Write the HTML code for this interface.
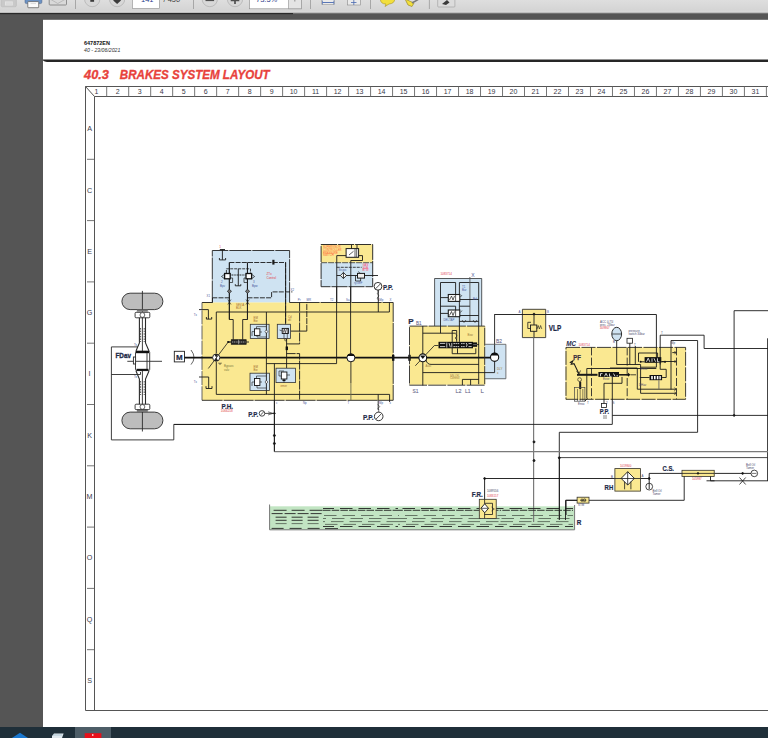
<!DOCTYPE html>
<html><head><meta charset="utf-8">
<style>
html,body{margin:0;padding:0;width:768px;height:738px;overflow:hidden;background:#555;}
svg{display:block;position:absolute;left:0;top:0;}
text{font-family:"Liberation Sans",sans-serif;}
</style></head><body>
<svg width="768" height="738" viewBox="0 0 768 738">
<defs>
<linearGradient id="tb" x1="0" y1="0" x2="0" y2="1">
<stop offset="0" stop-color="#dedede"/><stop offset="1" stop-color="#d2d2d2"/>
</linearGradient>
</defs>
<!-- background -->
<rect x="0" y="0" width="768" height="738" fill="#555"/>
<!-- toolbar -->
<rect x="0" y="0" width="768" height="13" fill="url(#tb)"/>
<rect x="0" y="10.8" width="768" height="1" fill="#d9d9d9"/>
<rect x="0" y="12.6" width="768" height="0.8" fill="#a0a0a0"/>
<rect x="0" y="13" width="293" height="1.2" fill="#2a2a2a"/>
<g id="tbicons">
<path d="M1.1 -2 H16.4 V5.3 Q16.4 6.8 14.9 6.8 H2.6 Q1.1 6.8 1.1 5.3 Z" fill="#c9c9c9" stroke="#b5b5b5" stroke-width="0.5"/>
<rect x="5" y="1.4" width="7.8" height="4.1" fill="#e3e3e3"/>
<path d="M6 3 H12 M6 4.3 H12" stroke="#c8c8c8" stroke-width="0.4"/>
<rect x="25" y="-2" width="16.9" height="5.6" rx="1.5" fill="#6b92c4" stroke="#4a5f80" stroke-width="0.5"/>
<rect x="27.8" y="1.6" width="10.9" height="6.1" rx="0.6" fill="#fbfbfb" stroke="#555" stroke-width="0.7"/>
<path d="M30.5 3.6 H36" stroke="#bbb" stroke-width="0.5"/>
<rect x="49.2" y="-2" width="17.3" height="7" rx="0.8" fill="#d9d9d9" stroke="#7a7a7a" stroke-width="0.8"/>
<path d="M50 -1 L57.8 3.5 L65.7 -1" fill="none" stroke="#a5a5a5" stroke-width="0.6"/>
<rect x="75.2" y="0" width="0.8" height="9" fill="#9a9a9a"/>
<circle cx="92.2" cy="-1" r="7.7" fill="#d8d8d8" stroke="#a8a8a8" stroke-width="0.6"/>
<rect x="90.3" y="-2" width="3.8" height="3.8" fill="#3c3c3c"/>
<circle cx="117.1" cy="-1" r="7.7" fill="#d8d8d8" stroke="#a8a8a8" stroke-width="0.6"/>
<path d="M113.2 0.5 L117.1 4 L121 0.5 L119 -1.5 H115.2 Z" fill="#3c3c3c"/>
<rect x="132.4" y="-1" width="27" height="9.5" fill="#fff" stroke="#8c8c8c" stroke-width="0.6"/>
<text x="141" y="1.8" font-size="7.5" fill="#2a3a8a">141</text>
<text x="163.5" y="1.8" font-size="7.5" fill="#444">/ 450</text>
<rect x="193" y="0" width="0.8" height="9" fill="#9a9a9a"/>
<circle cx="209.8" cy="-1" r="7.7" fill="#d8d8d8" stroke="#a8a8a8" stroke-width="0.6"/>
<rect x="205.5" y="-0.5" width="8.6" height="1.6" fill="#505050"/>
<circle cx="235" cy="-1" r="7.7" fill="#d8d8d8" stroke="#a8a8a8" stroke-width="0.6"/>
<path d="M230.7 0.3 H239.3 M235 -4 V4" stroke="#505050" stroke-width="1.7"/>
<rect x="249.6" y="-1" width="52" height="9.8" fill="#fff" stroke="#8c8c8c" stroke-width="0.6"/>
<rect x="288.7" y="-1" width="12.9" height="9.8" fill="#e4e4e4" stroke="#8c8c8c" stroke-width="0.6"/>
<text x="256" y="1.8" font-size="7.5" fill="#2a3a8a">73.5%</text>
<rect x="294.6" y="0" width="0.6" height="1.5" fill="#555"/>
<rect x="310" y="0" width="0.8" height="9" fill="#9a9a9a"/>
<rect x="321.7" y="-2" width="12.9" height="6.5" fill="#eaeaea" stroke="#9a9a9a" stroke-width="0.6"/>
<path d="M322.5 2.5 H333.8" stroke="#4a6ab0" stroke-width="0.9"/>
<path d="M322.5 0.5 V4.5 M333.8 0.5 V4.5" stroke="#4a6ab0" stroke-width="0.7"/>
<rect x="347.4" y="-2" width="12.9" height="7" fill="#eaeaea" stroke="#8a8a8a" stroke-width="0.6"/>
<path d="M351 2.5 H356.5 M353.8 -0.5 V5" stroke="#4a6ab0" stroke-width="0.8"/>
<rect x="370.2" y="0" width="0.8" height="9" fill="#9a9a9a"/>
<path d="M380.4 -1 Q380.4 4 386 4 L385 6.5 L389 4 Q394.7 3.5 394.7 -1 Z" fill="#f2df3c" stroke="#a79420" stroke-width="0.6"/>
<path d="M405 -1 L414 3 L412 6.5 L408 5 Z" fill="#f2df3c" stroke="#8a7a20" stroke-width="0.6"/>
<path d="M412 3 L419 -1" stroke="#7a7a7a" stroke-width="1.5"/>
<rect x="428.9" y="0" width="0.8" height="9" fill="#9a9a9a"/>
<rect x="437.7" y="-2" width="17.2" height="9" rx="0.8" fill="#dcdcdc" stroke="#9a9a9a" stroke-width="0.6"/>
<path d="M442 4 L447 0 L449.5 2.5 L446 5 Z" fill="#3a3a3a"/>
</g>
<!-- page -->
<rect x="43" y="19.8" width="725" height="707.2" fill="#fff"/>
<!-- taskbar -->
<rect x="0" y="727" width="768" height="11" fill="#1f2f39"/>
<rect x="75" y="727" width="36" height="11" fill="#4d5d67"/>
<path d="M11.9 738 L20 732.7 L28 738 Z" fill="#1a78d0"/>
<path d="M52 736 L54 733.5 H63.6 L62 738 H52 Z" fill="#dfe8ee"/>
<path d="M53 735 H62" stroke="#8fb0c0" stroke-width="0.6"/>
<rect x="84.7" y="733.2" width="16.7" height="5" fill="#e8101a"/>
<rect x="92.3" y="734" width="1" height="2" fill="#fff"/>

<g id="page">
<!-- header -->
<text x="84" y="44.8" font-size="5.4" font-weight="bold" fill="#111" textLength="26" lengthAdjust="spacingAndGlyphs">647872EN</text>
<text x="84" y="52" font-size="5.4" font-style="italic" fill="#333" textLength="36.4" lengthAdjust="spacingAndGlyphs">40 - 23/06/2021</text>
<path d="M43 59.4 H768 V61.9 H47 Q44.5 61.6 43 60.4 Z" fill="#262626"/>
<text x="84" y="78.9" font-size="13.6" font-weight="bold" font-style="italic" fill="#e8423c" stroke="#e8423c" stroke-width="0.35" textLength="25" lengthAdjust="spacingAndGlyphs">40.3</text>
<text x="119.8" y="78.9" font-size="13.6" font-weight="bold" font-style="italic" fill="#e8423c" stroke="#e8423c" stroke-width="0.35" textLength="149.8" lengthAdjust="spacingAndGlyphs">BRAKES SYSTEM LAYOUT</text>
</g>

<g id="frame" stroke="#555" stroke-width="1" fill="none">
<path d="M85.5 86.5 H768 M94.5 96.5 H768 M85.5 86.5 V710.5 H768 M94.5 96.5 V710.5 M85.5 86.5 L94.5 96.5"/>
</g>
<g id="ruler" stroke="#666" stroke-width="0.9" fill="none">
<path d="M106.70 86.5 V96.5 M128.69 86.5 V96.5 M150.68 86.5 V96.5 M172.67 86.5 V96.5 M194.66 86.5 V96.5 M216.65 86.5 V96.5 M238.64 86.5 V96.5 M260.63 86.5 V96.5 M282.62 86.5 V96.5 M304.61 86.5 V96.5 M326.60 86.5 V96.5 M348.59 86.5 V96.5 M370.58 86.5 V96.5 M392.57 86.5 V96.5 M414.56 86.5 V96.5 M436.55 86.5 V96.5 M458.54 86.5 V96.5 M480.53 86.5 V96.5 M502.52 86.5 V96.5 M524.51 86.5 V96.5 M546.50 86.5 V96.5 M568.49 86.5 V96.5 M590.48 86.5 V96.5 M612.47 86.5 V96.5 M634.46 86.5 V96.5 M656.45 86.5 V96.5 M678.44 86.5 V96.5 M700.43 86.5 V96.5 M722.42 86.5 V96.5 M744.41 86.5 V96.5 M766.40 86.5 V96.5 M87 159.30 H94 M87 220.60 H94 M87 281.90 H94 M87 343.20 H94 M87 404.50 H94 M87 465.80 H94 M87 527.10 H94 M87 588.40 H94 M87 649.70 H94"/>
</g>
<g font-size="7" fill="#3a3a4a" text-anchor="middle">
<text x="96.5" y="94.2">1</text>
<text x="117.70" y="94.2">2</text>
<text x="139.69" y="94.2">3</text>
<text x="161.68" y="94.2">4</text>
<text x="183.67" y="94.2">5</text>
<text x="205.66" y="94.2">6</text>
<text x="227.65" y="94.2">7</text>
<text x="249.64" y="94.2">8</text>
<text x="271.63" y="94.2">9</text>
<text x="293.62" y="94.2">10</text>
<text x="315.61" y="94.2">11</text>
<text x="337.60" y="94.2">12</text>
<text x="359.59" y="94.2">13</text>
<text x="381.58" y="94.2">14</text>
<text x="403.57" y="94.2">15</text>
<text x="425.56" y="94.2">16</text>
<text x="447.55" y="94.2">17</text>
<text x="469.54" y="94.2">18</text>
<text x="491.53" y="94.2">19</text>
<text x="513.52" y="94.2">20</text>
<text x="535.51" y="94.2">21</text>
<text x="557.50" y="94.2">22</text>
<text x="579.49" y="94.2">23</text>
<text x="601.48" y="94.2">24</text>
<text x="623.47" y="94.2">25</text>
<text x="645.46" y="94.2">26</text>
<text x="667.45" y="94.2">27</text>
<text x="689.44" y="94.2">28</text>
<text x="711.43" y="94.2">29</text>
<text x="733.42" y="94.2">30</text>
<text x="755.41" y="94.2">31</text>
<text x="89.6" y="131.25" font-size="7.2">A</text>
<text x="89.6" y="192.55" font-size="7.2">C</text>
<text x="89.6" y="253.85" font-size="7.2">E</text>
<text x="89.6" y="315.15" font-size="7.2">G</text>
<text x="89.6" y="376.45" font-size="7.2">I</text>
<text x="89.6" y="437.75" font-size="7.2">K</text>
<text x="89.6" y="499.05" font-size="7.2">M</text>
<text x="89.6" y="560.35" font-size="7.2">O</text>
<text x="89.6" y="621.65" font-size="7.2">Q</text>
<text x="89.6" y="682.95" font-size="7.2">S</text>
</g>
<g id="diagram">
<!-- fills -->
<g stroke="none">
<rect x="202" y="302.3" width="191.2" height="98" fill="#fae891"/>
<rect x="212.3" y="250.5" width="77.3" height="51.8" fill="#cfe3f2"/>
<rect x="321" y="244.4" width="51.7" height="18.3" fill="#fae891"/>
<rect x="321" y="262.7" width="51.7" height="23.9" fill="#cfe3f2"/>
<rect x="409.5" y="326" width="75.8" height="58.8" fill="#fae891"/>
<rect x="434.4" y="278.2" width="47.6" height="47.8" fill="#cfe3f2"/>
<rect x="485.2" y="344.4" width="20.7" height="34.9" fill="#cfe3f2"/>
<rect x="522.3" y="309.1" width="23.4" height="28.5" fill="#fae891"/>
<rect x="565.5" y="347.3" width="120.3" height="52.5" fill="#fae891"/>
<rect x="269.5" y="506.3" width="305" height="23.4" fill="#c2e5c3"/>
<rect x="479.3" y="499.5" width="17.1" height="18.6" fill="#fae891"/>
<rect x="614.8" y="468.1" width="25.6" height="23.2" fill="#fae891"/>
<rect x="681.9" y="470.5" width="32.7" height="5.9" fill="#fae891"/>
<rect x="577.1" y="497.2" width="11.9" height="5.9" fill="#fae891"/>
</g>

<!-- wheels & axle -->
<g stroke="#2a2a2a" stroke-width="0.9" fill="none">
<rect x="121.9" y="293.2" width="41" height="16.4" rx="8.2" fill="#bdbdbd"/>
<rect x="121.9" y="412.1" width="41" height="16.7" rx="8.3" fill="#bdbdbd"/>
<path d="M142.4 290.9 V317.8 M142.4 404.2 V431.5"/>
<rect x="136.9" y="309.6" width="10.9" height="2" fill="#777" stroke="none"/>
<rect x="136.9" y="409.6" width="10.9" height="2.4" fill="#777" stroke="none"/>
<rect x="135.1" y="312.3" width="14.7" height="5.5" rx="1" fill="#fff"/>
<rect x="135.1" y="404.2" width="14.7" height="5.4" rx="1" fill="#fff"/>
<circle cx="142.4" cy="315" r="2.4" fill="#fff" stroke-width="0.7"/>
<circle cx="142.4" cy="406.9" r="2.4" fill="#fff" stroke-width="0.7"/>
<path d="M139.4 317.8 V343 L136 351 M145.5 317.8 V343 L149 351 M139.4 404.2 V379 L136 371 M145.5 404.2 V379 L149 371" stroke-width="1.1"/>
<path d="M142.4 317.4 V404.4" stroke-width="0.9"/>
<path d="M140.6 328 V342 M144.2 328 V342 M140.6 381 V395 M144.2 381 V395" stroke-dasharray="1.6 1" stroke-width="0.8"/>
<rect x="135.5" y="351.1" width="14.2" height="19.5" rx="1.2" fill="#fff"/>
<rect x="136" y="351" width="13" height="2.2" fill="#111" stroke="none"/>
<rect x="136.5" y="368.8" width="12" height="2" fill="#111" stroke="none"/>
<path d="M127.3 361.3 H162 M147 353 V369"/>
<rect x="133.4" y="357" width="2.2" height="7" fill="#fff"/>
<path d="M111.4 346.9 H137.8 M111.4 346.9 V439.9 H173.8 V424.5 H274 M111.4 374.5 H140.5 V372"/>
</g>
<text x="115.5" y="357.8" font-size="7.8" font-weight="bold" fill="#1e2a48" stroke="#1e2a48" stroke-width="0.35" textLength="15.5" lengthAdjust="spacingAndGlyphs">FDav</text>
<text x="134" y="345.5" font-size="2.9" fill="#3a4a8a">Ts</text>
<text x="134" y="377.5" font-size="2.9" fill="#3a4a8a">Ts</text>

<!-- M -->
<g stroke="#222" fill="none">
<rect x="174.3" y="351.3" width="10.2" height="10.6" stroke-width="0.9" fill="#fff"/>
<path d="M191 350 Q197 357.6 191 364.6" stroke-width="0.7"/>
</g>
<text x="175.9" y="359.6" font-size="7.6" font-weight="bold" fill="#1e2a48" stroke="#1e2a48" stroke-width="0.22" textLength="6.6" lengthAdjust="spacingAndGlyphs">M</text>
</g>

<!-- P.H. block -->
<g stroke="#1a1a1a" stroke-width="0.9" fill="none">
<!-- block borders (dashed) -->
<path d="M202 400.3 V302.5" stroke="#555" stroke-width="0.9" stroke-dasharray="14 1.2"/><path d="M289.6 302.5 H393.2 V400.3 H202" stroke="#222" stroke-width="0.9" stroke-dasharray="30 1"/>
<path d="M202.1 302.5 H212.5 V298" stroke="#1a1a1a" stroke-width="0.9"/>
<path d="M212.3 302.5 V250.5 H289.6 V302.5" stroke="#222" stroke-width="0.9" stroke-dasharray="22 1"/>
<!-- main shaft -->
<path d="M184.5 357.7 H490.5" stroke="#111" stroke-width="1.8"/>
<!-- inner loop -->
<path d="M216.3 353 V312 H389.4 V302.3 M378.3 312 V290 M216.3 362 V394.4 H389.6 V402 M378.2 394.4 V410"/>
<!-- tank symbols left -->
<path d="M199 309.6 H208.4 V319.1 M206.4 317 V319.1 H211.7 V317 M199 377 H208.7 V388.5 M206 386.2 V388.5 H212 V386.2"/>
<!-- pump circle -->
<circle cx="216.2" cy="357.6" r="3.6" fill="#fff" stroke="#222" stroke-width="0.9"/>
<path d="M216.2 357.6 L214.35 354.4 A3.7 3.7 0 0 1 218.05 354.4 Z M216.2 357.6 L214.35 360.8 A3.7 3.7 0 0 0 218.05 360.8 Z" fill="#222" stroke="none"/>
<path d="M208.3 368.5 L228 342.3" stroke-width="0.8"/>
<ellipse cx="228.3" cy="342" rx="1.3" ry="0.9" fill="#111" stroke="none"/>
<path d="M228.3 342 H231.5" stroke-width="1.2"/>
<path d="M219 362.5 V364 H221 V362.5" stroke-width="0.6"/>
<!-- lines from blue valves down to spool -->
<path d="M229.3 262.5 V319.5 H233.2 V339.7 M247.4 262.5 V319.5 H242.7 V339.7" />
<!-- spool -->
<rect x="231.2" y="339.7" width="15" height="4.6" fill="#222" stroke="#111" stroke-width="0.6"/>
<path d="M232 342 H245.5" stroke="#ddd" stroke-width="0.7" stroke-dasharray="1.2 0.6"/>
<path d="M238.7 339.7 V344.3" stroke="#fff" stroke-width="0.5"/>
<path d="M246.2 342 H249" />
<!-- vertical at 266 -->
<path d="M266.4 312 V394.6 M266.4 363.6 H336.6"/>
<path d="M274.4 363.6 V451.6"/>
<!-- line x 285.6 top loop -->
<path d="M285.6 262.2 V324.3"/>
<path d="M286.6 338.6 V368.2"/><path d="M286.6 343.9 H299.6"/><path d="M298 331.1 H306.8"/><path d="M306.8 331.1 V302.3" stroke-dasharray="6 1"/>
<path d="M290.6 331.1 H298"/>
<rect x="285.6" y="346.5" width="2.4" height="3.6" fill="#111" stroke="none"/>
<path d="M299.6 302.5 V343.9 M286.6 353.6 H299.6 V400.3" stroke-dasharray="9 1"/>
<path d="M336.6 286.6 V363.6"/>
<path d="M350.6 286.6 V353.9" />
<path d="M350.9 361.8 V383" stroke="#222"/><path d="M350.9 383 V400.3" stroke="#6a6a50"/>
<!-- blue small boxes -->
<g fill="#cfe3f2" stroke="#333" stroke-width="0.8">
<rect x="250.3" y="324.3" width="18.8" height="14.3"/>
<rect x="277.3" y="324.3" width="13.3" height="14.3"/>
<rect x="250" y="373.2" width="19.4" height="17.2"/>
<rect x="276" y="368.2" width="19.4" height="14.4"/>
</g>
<!-- valves in small boxes -->
<g fill="#fff" stroke="#111" stroke-width="0.9">
<rect x="254.5" y="328.8" width="5.4" height="6.6"/>
<rect x="282.2" y="328.4" width="6.2" height="5.1"/><path d="M283.2 332.8 L284.3 329 L285.3 332.8 L286.4 329 M287.3 328.4 V333.5" stroke-width="0.6" fill="none"/>
<rect x="254.5" y="378.5" width="5.4" height="7"/>
<rect x="281.3" y="372" width="5.6" height="7"/>
</g>
<path d="M266.4 324.3 V338.6 M266.4 373.2 V390.4" stroke-width="0.9"/><path d="M252 331.6 H254.5 M256.5 328.8 V326.6 H266.4 M259.9 332 H262 M257 335.4 V337 H266.4 M252 331.6 V336" stroke-width="0.6"/>
<path d="M266.4 329.9 L267.8 331.6 L266.4 333.3 L265 331.6 Z" fill="#fff" stroke-width="0.6"/>
<path d="M252 382 H254.5 M256.5 378.5 V376 H266.4 M259.9 382 H262 M257 385.5 V388 H266.4 M252 382 V386" stroke-width="0.6"/>
<path d="M266.4 380.3 L267.8 382 L266.4 383.7 L265 382 Z" fill="#fff" stroke-width="0.6"/>
<path d="M279 371 H284 M279 371 V376 H281.3 M286.9 375 H290 M284 379 V382.6" stroke-width="0.6"/>
<rect x="282.5" y="379.5" width="3" height="1.6" fill="#111" stroke="none"/>
<path d="M284 333.5 V338.6 M287.3 333.5 V338.6 M279.5 330 L282.2 331" stroke-width="0.6"/><circle cx="285.6" cy="339.8" r="1" fill="none" stroke-width="0.6"/>
<!-- center white circle -->
<circle cx="350.9" cy="357.8" r="4" fill="#fff" stroke="#111" stroke-width="1"/>
<path d="M347.2 356 A4 4 0 0 1 354.6 356 Z" fill="#111" stroke="none"/>
<!-- shaft end marks -->
<rect x="392" y="354.8" width="2.4" height="6" fill="#111" stroke="none"/>
<rect x="408.3" y="354.8" width="2.4" height="6" fill="#111" stroke="none"/>
<!-- right lines 336/350 above block -->

</g>

<!-- blue block internals -->
<g stroke="#1a1a1a" stroke-width="0.9" fill="none">
<path d="M222.4 249.5 V259.8 M219.8 249.5 H225 M219.4 258 V259.9 H225.6 V258"/>
<path d="M229.4 262.5 H285.6 V324.3" stroke-dasharray="5 1.2"/>
<path d="M229.4 262.5 V319.5 M247.5 262.5 V319.5"/>
<path d="M226.4 273 V268.8 H250.5 V273" stroke-dasharray="3 1" stroke-width="0.8"/>
<path d="M230.5 275 H245.6" stroke-dasharray="1 0.6" stroke-width="1.1"/>
<path d="M238.3 268.8 V285.8 M235.3 284.2 V285.8 H240.8 V284.2"/>
<rect x="224.6" y="273.5" width="5.6" height="5.3" fill="#fff" stroke="#111" stroke-width="1.3"/>
<rect x="246" y="273.5" width="5.6" height="5.3" fill="#fff" stroke="#111" stroke-width="1.3"/>
<path d="M224.2 274.5 L221.5 276.5 L224.2 278.5 M251.9 274.5 L254.6 276.5 L251.9 278.5" stroke-width="0.7"/>
<path d="M230.5 278 H232.6 V282.5 H229.4 M245.6 278 H244 V282.5 H247.5" stroke-width="0.7"/>
<path d="M227.3 291.3 L229.4 289.3 L231.5 291.3 L229.4 293.3 Z M245.4 291.3 L247.5 289.3 L249.6 291.3 L247.5 293.3 Z" fill="#777" stroke-width="0.7"/>
<path d="M212.3 297.8 H229.4 M247.5 297.8 H271.6 V291.9 H292.4" stroke-dasharray="5 1.2"/>
<path d="M273.4 259.8 V264.6" stroke-width="2.2"/>
<path d="M227.8 299.5 L231 304.5 M231 299.5 L227.8 304.5 M246 299.5 L249.2 304.5 M249.2 299.5 L246 304.5" stroke-width="0.6"/>
</g>
<g font-size="3" fill="#e0404a">
<text x="266.5" y="275">ZTx</text><text x="266.5" y="279">Control</text>
</g>
<text x="219.3" y="248" font-size="3" fill="#e0404a">1</text>
<g font-size="2.9" fill="#4a5a9a">
<text x="221" y="283">2</text><text x="220" y="286.5">Bpv</text>
<text x="253" y="283">3</text><text x="252" y="286.5">Bpw</text>
<text x="206.5" y="297.3">X1</text><text x="290.5" y="291">X2</text>
<text x="297.8" y="300.8">Pr</text><text x="306.5" y="300.8">MR</text>
<text x="330" y="300.8">T2</text><text x="346" y="300.8">Sa</text>
<text x="379.3" y="300.8">Mp</text><text x="389.5" y="300.8">X</text>
<text x="193.8" y="315.5">Tx</text><text x="193.8" y="382.5">Tx</text>
<text x="276" y="404.2">c</text><text x="303" y="404.2">Np</text>
<text x="347.5" y="404.2">T</text><text x="379" y="404.2">Mp</text><text x="389.5" y="404.2">x</text>
</g>
<g font-size="2.9" fill="#a06a30">
<text x="236" y="306">SEV.A</text><text x="236" y="309">BLK</text>
<text x="253.5" y="319">EM</text><text x="253.5" y="322">Bw</text>
<text x="288" y="318">Cd</text><text x="288" y="321">dtl</text>
<text x="253.5" y="368">EM</text><text x="253.5" y="371">Bw</text>
<text x="280.5" y="387">emer</text>
<text x="224" y="367.2" fill="#7a7a40">Bypass</text><text x="224" y="370.5" fill="#7a7a40">valv</text>
</g>

<!-- top small block -->
<g stroke="#1a1a1a" stroke-width="0.9" fill="none">
<path d="M321.1 244.5 H372.7 V286.7 H321.1 Z" stroke-dasharray="16 1"/>
<path d="M321.1 262.7 H372.7" stroke-dasharray="6 1" stroke-width="0.7"/>
<rect x="346.1" y="248.6" width="12.5" height="8.7" fill="#fff" stroke-width="1"/>
<path d="M349 255 L353.5 251.3 M355 249 V257 M356.7 249 V257" stroke-width="0.7"/>
<path d="M351.5 248.6 V245 M357 248.6 V245"/>
<path d="M336.75 255.6 H346.1 M336.75 255.6 V302.5 M350.8 260.5 H362.5 V255.6 H358.6 M350.8 260.5 V302.5"/>
<path d="M336.75 267.3 H361.7" stroke-dasharray="3 1" stroke-width="0.8"/>
<path d="M336.75 275.5 H378"/>
<path d="M343.4 272.5 L346.4 275.5 L343.4 278.5 L340.4 275.5 Z M343.4 272.5 V278.5" fill="#fff"/>
<rect x="357.5" y="273.4" width="7" height="4.7" fill="#eee" stroke-width="1"/>
<path d="M355.5 275.5 V281 H360.6 V278.1" stroke-width="0.8"/>
<path d="M358 271.5 L360.5 273.4" stroke-width="0.6"/>
</g>
<g font-size="2.7" fill="#ff5a30">
<text x="323" y="248.3">SUPERVISOR</text><text x="323" y="251">CONTROLLER</text><text x="323" y="253.7">PRESSURE</text><text x="323" y="256.4">SWITCH</text>
</g>
<g font-size="2.7" fill="#ff4060"><text x="362.5" y="266">GAS</text><text x="362.5" y="268.5">SUB</text><text x="362.5" y="271">BTW</text></g>
<g font-size="2.7" fill="#4a5a9a"><text x="338.5" y="270.5">Str.gvc</text><text x="354" y="283.8">ry.GEF</text></g>

<!-- P block -->
<g stroke="#1a1a1a" stroke-width="0.9" fill="none">
<path d="M409.5 326.1 H484.7 V385.2 H409.5 Z" stroke="#2a2a2a" stroke-width="0.9" stroke-dasharray="18 1.2"/>
<path d="M434.6 326 V278.5 H481.7 V326" stroke="#333" stroke-width="0.8"/>
<path d="M440.5 282.5 V333.2 M440.5 282.5 H455.6 V294.5 M459.4 282.5 V341.8 M459.4 282.5 H478.7 V384.2"/>
<path d="M469.9 277 V321.8" stroke="#555"/><path d="M440.5 297.6 H448.3 M459.8 299.5 H478.7 M440.5 306.2 H455.6 V310 M459.4 306.2 H469.9 M440.5 313.4 H448.3 M459.8 315.5 H478.7 M459.4 321.4 H478.7"/>
<rect x="448.3" y="294.5" width="11.5" height="6.9" fill="#fff" stroke-width="1.1"/>
<rect x="448.3" y="310" width="11.5" height="6.7" fill="#fff" stroke-width="1.1"/>
<path d="M449.5 300 L451.5 296 L453 300 L454.5 296 M455.6 294.5 V301.4 M449.5 315.5 L451.5 311.5 L453 315.5 L454.5 311.5 M455.6 310 V316.7" stroke-width="0.7"/>
<path d="M460.5 297 L462 295 M460.5 312.5 L462 310.5" stroke-width="0.6"/>
<path d="M422.8 326 V385.5"/>
<path d="M422.8 333.2 H455.6"/>
<path d="M452.2 330.5 V353.7 H475.8 V348.3 M452.2 330.5 H456.7 V341.8"/>
<path d="M455.6 333.5 L457 336 L455 338 L457 340" stroke-width="0.6"/>
<rect x="438.5" y="341.8" width="34.5" height="6.5" fill="#111" stroke="none"/>
<rect x="472.5" y="342.4" width="4.6" height="4.4" fill="#111" stroke="none"/>
<g stroke="#fff" fill="none" stroke-width="0.75">
<path d="M440 343.4 h5.2 M440 346.6 h5.2 M446.8 342.6 V347.6 M449 343 L450.3 347.2 M451.8 343 V347.3"/>
<path d="M453.4 343.6 h6.3 M453.4 346.6 h6.3 M461 343.6 h4.3 M461 346.6 h4.3" stroke-dasharray="1.6 0.5"/>
<path d="M466.3 343 q1.6 1.9 0 3.9 M468.5 343.6 h3.2 M468.5 346.6 h3.2 M473.6 344.6 h0.9 M475.5 344.6 h0.9"/>
</g>
<path d="M457.5 348.3 V353.7"/>
<path d="M477.1 344.6 H479"/>
<path d="M415.3 365.8 L434.4 345.5 H438.5" stroke-width="0.8"/>
<circle cx="422.8" cy="357.8" r="3.9" fill="#fff" stroke="#111" stroke-width="1.1"/>
<path d="M420 355.5 L425.6 355.5 L422.8 359 Z" fill="#111" stroke="none"/>
<path d="M426 360 Q427 364.4 431 364.4 H478.8"/>
<path d="M422.8 372.6 H494.6 V361.4"/>
<path d="M462.4 385 V379.4 H478.8 M470.6 379.4 V385"/>
<path d="M494.6 314.2 V353.2"/>
<circle cx="494.6" cy="357.3" r="4.1" fill="#fff" stroke="#111" stroke-width="1.1"/>
<path d="M490.7 355.5 A4 4 0 0 1 498.5 355.5 Z" fill="#111" stroke="none"/>
<path d="M485 344.3 H505.9 V378.7 H485" stroke="#555" stroke-width="0.8"/><path d="M462 320 L464 322.5 L466 320 M473 320 L475 322.5 L477 320" stroke-width="0.6"/>
</g>
<g font-size="6" fill="#6a6a8a" stroke="#6a6a8a" stroke-width="0.1">
<text x="412.5" y="393" textLength="6" lengthAdjust="spacingAndGlyphs">S1</text>
<text x="455.5" y="393" textLength="6" lengthAdjust="spacingAndGlyphs">L2</text>
<text x="465" y="393" textLength="5.5" lengthAdjust="spacingAndGlyphs">L1</text>
<text x="480.5" y="393">L</text>
<text x="496" y="343" textLength="6" lengthAdjust="spacingAndGlyphs">B2</text>
<text x="416" y="324.5" textLength="5.5" lengthAdjust="spacingAndGlyphs">B1</text>
</g>
<text x="408.3" y="324" font-size="8" font-weight="bold" fill="#1e2a48" stroke="#1e2a48" stroke-width="0.22">P</text>
<text x="471.2" y="276.5" font-size="5" fill="#4a5a9a">X</text>
<g font-size="2.9" fill="#e04050"><text x="440.5" y="274.5">1083714</text></g>
<g font-size="2.9" fill="#4a5a9a"><text x="462" y="288">T1</text><text x="462" y="291">Bar</text><text x="443.5" y="321">DELTAP</text><text x="473" y="300">Brk</text></g>
<g font-size="2.9" fill="#9a7a40"><text x="467.5" y="336">Bxw</text><text x="425.5" y="366.5">Auxi</text><text x="450" y="376.5">SN-OK</text><text x="450" y="379">Control</text><text x="497" y="370">DLY</text><text x="497" y="374">x</text></g>

<!-- VLP -->
<g stroke="#1a1a1a" stroke-width="0.9" fill="none">
<path d="M522.4 309.3 H545.7 V337.6 H522.4 Z" stroke="#333" stroke-width="0.9"/>
<path d="M494.6 314.5 H656.4 V347.4" stroke="#111"/>
<circle cx="534" cy="314.1" r="0.9" fill="#111"/><circle cx="484.6" cy="478.5" r="0.9" fill="#111"/>
<path d="M534 314.1 V337.6"/>
<path d="M533.6 337.6 V522" stroke="#7a7a7a" stroke-width="1.2"/>
<rect x="530.5" y="325" width="6.3" height="6.3" fill="#fae891" stroke-width="0.9"/>
<path d="M530.5 328.5 H527.8 V322.3 H531" stroke-width="0.8"/>
<path d="M537 329 L538.2 325.5 L539.4 329 L540.6 325.5 L541.8 329" stroke-width="0.6"/>
</g>
<text x="548.7" y="331.3" font-size="8.2" font-weight="bold" fill="#1e2a48" stroke="#1e2a48" stroke-width="0.22" textLength="12.5" lengthAdjust="spacingAndGlyphs">VLP</text>
<g font-size="3" fill="#4a5a9a"><text x="518.5" y="312.5">A</text><text x="547" y="312.5">B</text></g>

<!-- MC block -->
<g stroke="#1a1a1a" stroke-width="0.9" fill="none">
<path d="M566 347.4 H685.6 V399.3 H566 Z" stroke="#2a2a2a" stroke-width="0.9" stroke-dasharray="14 1.5"/>
<path d="M591.5 347.4 V399.3 M627.2 347.4 V399.3 M676.5 347.4 V399.3" stroke="#2a2a2a" stroke-width="0.9" stroke-dasharray="8 2.2"/>
<!-- pedal -->
<path d="M569.8 362.8 L572.8 361 L571.3 364.3 L574 363.6 L578.8 373.5" stroke-width="1.1"/><path d="M576.5 371 L579 374 L580.5 370.5" stroke-width="0.7"/>
<path d="M577 374.8 H597.5" stroke-width="2"/>
<circle cx="579.6" cy="379.6" r="1.9" fill="#fae891" stroke-width="0.6"/>
<path d="M580.2 381.6 V389" stroke-width="2"/>
<rect x="574.5" y="387.4" width="10.4" height="13.8" fill="none" stroke="#444" stroke-width="0.7"/>
<path d="M577.5 389 V401 M580.2 389 V401 M582.8 389 V401" stroke-width="0.5"/>
<path d="M584.9 401.2 L587.5 398.3"/>
<path d="M586.8 398.3 V368.5 H656.3"/>
<!-- spool 1 -->
<rect x="598.4" y="372" width="20.6" height="4.9" fill="#111" stroke="none"/>
<g stroke="#fff" fill="none" stroke-width="0.8"><path d="M600.5 376.3 V373.6 H602.5 M604.5 376.3 L606 373.3 L607.5 376.3 M609.5 373.5 V376.3 H611.5 M613.5 373.5 L615 376.3 M616.5 375.8 h1.5"/></g>
<path d="M619 374.8 H628.5" stroke-width="1.6"/><path d="M628 372.8 L630.5 374.8 L628 376.8 Z" fill="#111" stroke="none"/><path d="M630.5 374.8 H636" stroke-width="0.8"/>
<!-- accumulator -->
<ellipse cx="616.7" cy="334" rx="4.9" ry="6.7" fill="#cfe3f2" stroke-width="0.9"/>
<path d="M611.8 334 H621.6" stroke-width="0.7"/>
<path d="M616.7 340.7 V364.5 H640.6 V393.3 H675.9"/>
<rect x="627" y="338.3" width="5.6" height="4.9" fill="#fff" stroke-width="0.8"/>
<path d="M629.8 343.2 V364.5 M635.3 346 V364.5"/>
<path d="M604 383.3 V405 M604 383.3 H622 V376.9"/>
<path d="M612.3 376.9 V424.4 M612.3 415.4 H768"/>
<rect x="601.5" y="403.5" width="5" height="4" fill="#fff" stroke-width="0.8"/>
<path d="M610 368 H637.3 V389.2 H675.9"/>
<!-- right part spools -->
<rect x="644.6" y="357.1" width="16.7" height="5.7" fill="#111" stroke="none"/>
<g stroke="#fff" fill="none" stroke-width="0.8"><path d="M646.5 361.8 L648.2 358.2 L649.8 361.8 M652 358.3 V361.8 M654 358.3 L655.6 361.8 M657.5 358.3 V361.8 H659.5"/></g><circle cx="640.6" cy="361.8" r="1" fill="#111" stroke="none"/><circle cx="665" cy="361.8" r="1" fill="#111" stroke="none"/>
<rect x="649.5" y="375" width="12.6" height="5.2" fill="#111" stroke="none"/>
<g fill="#fff" stroke="none"><rect x="651.2" y="376" width="1.6" height="3.3"/><rect x="654" y="376" width="1.6" height="3.3"/><rect x="656.8" y="376" width="1.6" height="3.3"/><rect x="659.4" y="376" width="1.4" height="3.3"/></g>
<path d="M640.6 361.8 H644.6 M661.3 361.8 H666 M638.5 361.8 V353 H657.6 V357.1 M661.3 361.5 H675.9 M672.3 352.6 H675.9 M656.4 347.4 V367.2 H640.6 M660.2 362.8 V369.3 H666.2 V377.5 H662.1 M639.8 377.5 H649.5"/><path d="M658.9 380.2 V389.2" stroke="#666"/>
<path d="M674.5 351 L675.9 352.6 L674.5 354.2 M674.5 360 L675.9 361.5 L674.5 363 M674.5 387.6 L675.9 389.2 L674.5 390.8 M674.5 391.7 L675.9 393.3 L674.5 394.9" stroke-width="0.7"/>
<path d="M660.2 364.5 V335.2 H704.1 V348.5 H768 M671 389.5 V340.5 H697.6 V432.3 H559.3 V520"/>
<path d="M697.6 432.3 H697.6"/>
</g>
<text x="566.3" y="346" font-size="7.4" font-weight="bold" font-style="italic" fill="#1e2a48" textLength="9.8" lengthAdjust="spacingAndGlyphs">MC</text>
<text x="578.5" y="345.5" font-size="2.9" fill="#e04050">1083714</text>
<text x="573.3" y="359.8" font-size="7.8" font-weight="bold" fill="#3a3040" stroke="#3a3040" stroke-width="0.25" textLength="7.6" lengthAdjust="spacingAndGlyphs">PF</text>
<text x="599.8" y="413.8" font-size="7.2" font-weight="bold" fill="#1e2a48" stroke="#1e2a48" stroke-width="0.22" textLength="9.3" lengthAdjust="spacingAndGlyphs">P.P.</text>
<g font-size="2.9" fill="#4a4a6a">
<text x="578" y="404.8">Ensx</text><text x="587" y="403.5">T</text><text x="606" y="403.5">2</text><text x="612.5" y="403.5">S</text>
<text x="600" y="322.5">ACC 0,75l</text><text x="600" y="325.5">prec. 23bar</text>
<text x="628.5" y="331.5">pressure</text><text x="628.5" y="334.5">switch 30bar</text>
<text x="613" y="342.5">B</text><text x="634" y="345.5">T</text><text x="661" y="334">T</text><text x="671" y="343.5">Mp</text>
<text x="603" y="379.5">Ecse</text><text x="641" y="369.5">Ecsx</text><text x="639" y="386">DHav</text>
</g>
<text x="600" y="328.5" font-size="2.9" fill="#e04050">409867</text>
<path d="M603 416 H607 M603 418 H607" stroke="#333" stroke-width="0.6"/>

<!-- lower lines -->
<g stroke="#1a1a1a" stroke-width="0.9" fill="none">
<path d="M734.1 310.7 H768 M734.1 310.7 V415.6 M767.6 338.3 V481"/>
<circle cx="734.1" cy="415.4" r="0.9" fill="#111"/>
<path d="M274.4 451.6 H768" stroke="#7a7a7a" stroke-width="1.2"/>
<path d="M274.4 400.3 V451.6"/>
<path d="M173.8 424.4 H612.3"/>

<path d="M559.4 457.6 H768" stroke="#333"/>
<circle cx="534" cy="441.9" r="1" fill="#111"/>
<circle cx="534" cy="460.6" r="1" fill="#111"/>
<circle cx="559.3" cy="457.8" r="1" fill="#111"/>
<circle cx="274.4" cy="435.5" r="1" fill="#111"/>
<circle cx="274.4" cy="443.5" r="1" fill="#111"/>
<circle cx="274.4" cy="413.4" r="0.8" fill="#111"/>
<!-- RH -->
<path d="M484.6 499.5 V478.5 H615 M640.6 478.5 H649.2 V473.4 H682 M714.2 473.4 H754 M649.2 478.5 V489" stroke="#111"/>
<rect x="614.9" y="468.6" width="25.6" height="22.5" fill="#fae891" stroke="#333" stroke-width="0.8"/>
<path d="M627.7 471.7 L634.4 478.4 L627.7 485 L621.1 478.4 Z" fill="#fff" stroke-width="0.9"/>
<path d="M615 478.5 H640.6 M627.7 471.7 V485 M624.6 481.6 V489.3 M630.9 481.6 V489.3" stroke-width="0.8"/>
<circle cx="649.2" cy="486.6" r="3.4" fill="none" stroke-width="0.8"/>
<circle cx="649.2" cy="478.5" r="0.9" fill="#111"/>
<!-- C.S. -->
<rect x="682" y="470.3" width="32.2" height="6.1" fill="#fae891" stroke="#333" stroke-width="0.8"/>
<path d="M682 473.4 H714.2" stroke-width="0.8"/>
<circle cx="698" cy="473.4" r="0.8" fill="#111"/>
<path d="M684.2 476.4 V500.3 H566.1 V515"/>
<path d="M710.5 480.8 H768 M706.5 480.8 H714.5 M710.5 476.4 V480.8" />
<path d="M739.5 477.5 L745.7 484.5 M745.7 477.5 L739.5 484.5" stroke-width="0.8"/>
<circle cx="742.6" cy="473.4" r="0.9" fill="#111"/>
<circle cx="754.3" cy="473.4" r="3.3" fill="#fff" stroke-width="0.8"/>
<path d="M752 473.4 H756.5" stroke-width="0.6"/>
<!-- small filter -->
<rect x="577.1" y="497.2" width="11.9" height="5.9" fill="#fae891" stroke="#333" stroke-width="0.8"/>
<path d="M580 500.2 H586 M582 498.5 V502" stroke-width="0.8"/>
<circle cx="584.5" cy="500.2" r="1.4" fill="none" stroke-width="0.6"/>
</g>
<text x="604.6" y="490.2" font-size="7.4" font-weight="bold" fill="#1e2a48" stroke="#1e2a48" stroke-width="0.22" textLength="8.6" lengthAdjust="spacingAndGlyphs">RH</text>
<text x="662.6" y="471" font-size="7.4" font-weight="bold" fill="#1e2a48" stroke="#1e2a48" stroke-width="0.22" textLength="11.4" lengthAdjust="spacingAndGlyphs">C.S.</text>
<g font-size="2.9" fill="#e04050"><text x="620" y="467">1019840</text><text x="692" y="480">105987</text><text x="487" y="496.6">1083157</text></g>
<g font-size="2.9" fill="#4a4a6a"><text x="611" y="478">B</text><text x="641.5" y="476.5">A</text>
<text x="652.5" y="492">Bell Oil</text><text x="652.5" y="495">Tamer</text>
<text x="746" y="466">Bell Oil</text><text x="746" y="469">Tamer</text>
<text x="578" y="506">STM</text><text x="487" y="491.6">1089556</text></g>

<!-- reservoir -->
<g fill="none">
<path d="M269.6 504.5 V529.8 H574.6 V505" stroke="#777" stroke-width="1"/>
<path d="M273.6 510.3 H323" stroke="#222" stroke-width="0.9" stroke-dasharray="13 5"/>
<path d="M271.6 513.6 H323" stroke="#222" stroke-width="0.9" stroke-dasharray="11 2"/>
<path d="M275.6 517.2 H323" stroke="#222" stroke-width="0.9" stroke-dasharray="11 5"/>
<path d="M275.6 520.3 H323" stroke="#222" stroke-width="0.9" stroke-dasharray="11 5"/>
<path d="M275.6 523.6 H323" stroke="#5a6a5a" stroke-width="0.9" stroke-dasharray="11 5"/>
<path d="M271.6 528.4 H323" stroke="#222" stroke-width="0.9" stroke-dasharray="12 6"/>
<path d="M323 508.5 H398" stroke="#222" stroke-width="0.9" stroke-dasharray="12.5 6" stroke-dashoffset="-17.0"/>
<path d="M323 510.3 H398" stroke="#222" stroke-width="0.9" stroke-dasharray="7.5 1.2" stroke-dashoffset="-0.0"/>
<path d="M323 515.5 H398" stroke="#5a6a5a" stroke-width="0.9" stroke-dasharray="12.5 6" stroke-dashoffset="-1.0"/>
<path d="M323 518.5 H398" stroke="#5a6a5a" stroke-width="0.9" stroke-dasharray="12.5 6" stroke-dashoffset="-9.0"/>
<path d="M323 521.6 H398" stroke="#5a6a5a" stroke-width="0.9" stroke-dasharray="12.5 6" stroke-dashoffset="-8.0"/>
<path d="M323 524.4 H398" stroke="#5a6a5a" stroke-width="0.9" stroke-dasharray="12.5 6" stroke-dashoffset="-2.0"/>
<path d="M323 526.5 H398" stroke="#222" stroke-width="0.9" stroke-dasharray="12.5 6" stroke-dashoffset="-17.0"/>
<path d="M398 508.5 H500" stroke="#222" stroke-width="0.9" stroke-dasharray="12.5 6" stroke-dashoffset="-4.5"/>
<path d="M398 510.3 H500" stroke="#222" stroke-width="0.9" stroke-dasharray="7.5 1.2" stroke-dashoffset="-6.0"/>
<path d="M398 515.5 H500" stroke="#5a6a5a" stroke-width="0.9" stroke-dasharray="12.5 6" stroke-dashoffset="-7.0"/>
<path d="M398 518.5 H500" stroke="#5a6a5a" stroke-width="0.9" stroke-dasharray="12.5 6" stroke-dashoffset="-15.0"/>
<path d="M398 521.6 H500" stroke="#5a6a5a" stroke-width="0.9" stroke-dasharray="12.5 6" stroke-dashoffset="-14.0"/>
<path d="M398 524.4 H500" stroke="#5a6a5a" stroke-width="0.9" stroke-dasharray="12.5 6" stroke-dashoffset="-8.0"/>
<path d="M398 526.5 H500" stroke="#222" stroke-width="0.9" stroke-dasharray="12.5 6" stroke-dashoffset="-4.5"/>
<path d="M500 508.5 H573" stroke="#222" stroke-width="0.9" stroke-dasharray="12.5 6" stroke-dashoffset="-9.5"/>
<path d="M500 510.3 H573" stroke="#222" stroke-width="0.9" stroke-dasharray="7.5 1.2" stroke-dashoffset="-2.3"/>
<path d="M500 515.5 H573" stroke="#5a6a5a" stroke-width="0.9" stroke-dasharray="12.5 6" stroke-dashoffset="-12.0"/>
<path d="M500 518.5 H573" stroke="#5a6a5a" stroke-width="0.9" stroke-dasharray="12.5 6" stroke-dashoffset="-1.5"/>
<path d="M500 521.6 H573" stroke="#5a6a5a" stroke-width="0.9" stroke-dasharray="12.5 6" stroke-dashoffset="-0.5"/>
<path d="M500 524.4 H573" stroke="#5a6a5a" stroke-width="0.9" stroke-dasharray="12.5 6" stroke-dashoffset="-13.0"/>
<path d="M500 526.5 H573" stroke="#222" stroke-width="0.9" stroke-dasharray="12.5 6" stroke-dashoffset="-9.5"/>
<path d="M325 528.6 H338" stroke="#222" stroke-width="0.9"/>
</g>
<g stroke="#1a1a1a" stroke-width="0.9" fill="none">
<path d="M559.4 457.6 V519.4 M565.5 500.3 V520 M565.5 500.3 H577.1"/>
<rect x="479.3" y="499.3" width="16.9" height="19.1" fill="#fae891" stroke="#333" stroke-width="0.8"/>
<path d="M484.7 503.8 L488.5 508.3 L484.7 512.8 L480.9 508.3 Z" fill="#fff"/>
<path d="M480.9 508.3 H488.5" stroke-width="0.7"/>
<path d="M484.6 499.3 V503.8 M484.6 512.8 V518.4 M484.6 503.3 H492.5 V514.5 H484.6" stroke-width="0.8"/>
<path d="M491.5 507 L494.3 509 L491.5 511" stroke-width="0.6"/>
</g>
<text x="471.8" y="496.6" font-size="7" font-weight="bold" fill="#1e2a48" stroke="#1e2a48" stroke-width="0.22" textLength="11" lengthAdjust="spacingAndGlyphs">F.R.</text>
<text x="576.8" y="525.3" font-size="7" font-weight="bold" fill="#1e2a48" stroke="#1e2a48" stroke-width="0.22" textLength="4.6" lengthAdjust="spacingAndGlyphs">R</text>
<!-- P.P. gauges -->
<g stroke="#222" stroke-width="0.8" fill="#fff">
<circle cx="378" cy="286.3" r="3.9" stroke-width="0.9"/>
<path d="M375.5 288.8 L380.5 283.8" fill="none"/>
<path d="M378 289.7 V293 M377 293 L379 296 L377 298 L379 301" fill="none" stroke-width="0.6"/>
<circle cx="378.7" cy="416.4" r="4.3" stroke-width="0.9"/>
<path d="M376 419.1 L381.4 413.7" fill="none"/>
<path d="M378.7 412.3 V409 M377.7 409 L379.7 406.5 L377.7 404.5" fill="none" stroke-width="0.6"/>
<circle cx="262" cy="413.4" r="2.8"/>
<path d="M260.5 415 L263.8 411.8" fill="none"/>
<path d="M264.8 413.4 H274" fill="none"/>
<path d="M268 411.8 L272.8 413.4 L268 415" fill="none" stroke-width="0.6"/>
</g>
<g font-weight="bold" fill="#1e2a48" stroke="#1e2a48" stroke-width="0.22">
<text x="383" y="289.6" font-size="8" textLength="10" lengthAdjust="spacingAndGlyphs">P.P.</text>
<text x="363" y="419.6" font-size="8" textLength="10.5" lengthAdjust="spacingAndGlyphs">P.P.</text>
<text x="248.3" y="416.5" font-size="7.6" textLength="10" lengthAdjust="spacingAndGlyphs">P.P.</text>
<text x="221.6" y="408.8" font-size="6.9" textLength="11.4" lengthAdjust="spacingAndGlyphs">P.H.</text>
</g>
<text x="220.8" y="412.3" font-size="3" fill="#e03a3a" textLength="12" lengthAdjust="spacingAndGlyphs">1066218</text>
</svg>
</body></html>
